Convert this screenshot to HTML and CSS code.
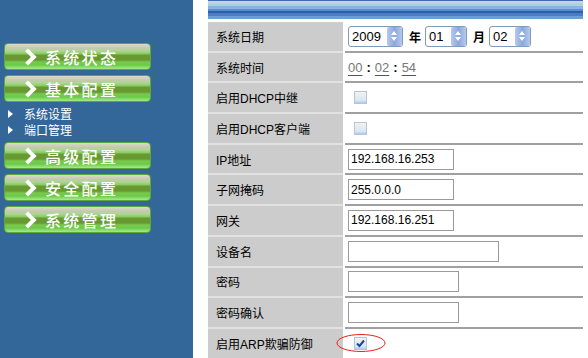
FILE: index.html
```html
<!DOCTYPE html>
<html lang="zh-CN">
<head>
    <meta charset="UTF-8">
    <title>系统设置</title>
    <link rel="stylesheet" href="styles.css">
</head>
<body>
    <div class="sidenav">
        <a href="#" class="menu-button"><span class="chev"></span>系统状态</a>
        <a href="#" class="menu-button"><span class="chev"></span>基本配置</a>
        <ul class="sub-menu">
            <li><span class="tri"></span>系统设置</li>
            <li><span class="tri"></span>端口管理</li>
        </ul>
        <a href="#" class="menu-button"><span class="chev"></span>高级配置</a>
        <a href="#" class="menu-button"><span class="chev"></span>安全配置</a>
        <a href="#" class="menu-button"><span class="chev"></span>系统管理</a>
    </div>

    <div class="main">
        <div class="banner"></div>
        <div class="form-table">
            <div class="label">系统日期</div>
            <div class="value">
                <div class="spin wide"><span>2009</span><i class="spin-btn"></i></div>
                <b class="unit">年</b>
                <div class="spin"><span>01</span><i class="spin-btn"></i></div>
                <b class="unit">月</b>
                <div class="spin"><span>02</span><i class="spin-btn"></i></div>
            </div>

            <div class="label">系统时间</div>
            <div class="value time">
                <u>00</u><b>:</b><u>02</u><b>:</b><u>54</u>
            </div>

            <div class="label">启用DHCP中继</div>
            <div class="value"><span class="check"></span></div>

            <div class="label">启用DHCP客户端</div>
            <div class="value"><span class="check"></span></div>

            <div class="label">IP地址</div>
            <div class="value"><input class="text-input" type="text" value="192.168.16.253"></div>

            <div class="label">子网掩码</div>
            <div class="value"><input class="text-input" type="text" value="255.0.0.0"></div>

            <div class="label">网关</div>
            <div class="value"><input class="text-input" type="text" value="192.168.16.251"></div>

            <div class="label">设备名</div>
            <div class="value"><input class="text-input long" type="text" value=""></div>

            <div class="label">密码</div>
            <div class="value"><input class="text-input mid" type="password" value=""></div>

            <div class="label">密码确认</div>
            <div class="value"><input class="text-input mid" type="password" value=""></div>

            <div class="label">启用ARP欺骗防御</div>
            <div class="value">
                <span class="check checked">
                    <svg width="11" height="11" viewBox="0 0 11 11"><path d="M2 5.5 L4.5 8 L9 2.5" fill="none" stroke="#21439c" stroke-width="2"/></svg>
                    <svg class="ring" width="50" height="20" viewBox="0 0 50 20"><ellipse cx="25" cy="10" rx="24" ry="8.5" fill="none" stroke="#e8201a" stroke-width="1"/></svg>
                </span>
            </div>
        </div>
    </div>
</body>
</html>
```

FILE: styles.css
```css
/* page reset */
body {
    margin: 0;
    padding: 0;
    display: flex;
    height: 358px;
    overflow: hidden;
    background-color: #fff;
    font-family: "Liberation Sans", "Noto Sans CJK SC", sans-serif;
    font-size: 12px;
}

/* left navigation */
.sidenav {
    width: 193px;
    flex-shrink: 0;
    background-color: #336699;
    padding-top: 43px;
    box-sizing: border-box;
}

.menu-button {
    display: flex;
    align-items: center;
    width: 147px;
    height: 27px;
    margin: 0 0 5px 4px;
    box-sizing: border-box;
    border: 1px solid #5ba93c;
    border-radius: 4px;
    background: linear-gradient(to bottom,
        #d8dcc8 0, #c8c8b0 4px, #a8d890 7px, #88c860 10px,
        #6a9a30 11px, #669933 16px, #7cc850 18px, #66cc44 21px, #9ee080 24px, #c0e8a8 27px);
    color: #fff;
    text-decoration: none;
    font-family: "Noto Sans CJK SC", sans-serif;
    font-size: 16px;
    font-weight: 500;
    letter-spacing: 2.3px;
    padding-left: 17px;
}

.chev {
    width: 8px;
    height: 8px;
    border-right: 4px solid #fff;
    border-top: 4px solid #fff;
    transform: rotate(45deg);
    margin-right: 11px;
}

.sub-menu {
    list-style: none;
    margin: -1px 0 4px 0;
    padding: 0;
    color: #fff;
    font-size: 12px;
    font-family: "Noto Sans CJK SC", sans-serif;
}

.sub-menu li {
    height: 16px;
    line-height: 16px;
    display: flex;
    align-items: center;
}

.tri {
    width: 0;
    height: 0;
    border-left: 5px solid #fff;
    border-top: 4px solid transparent;
    border-bottom: 4px solid transparent;
    margin: 0 11px 0 8px;
}

/* right side content */
.main {
    width: 375px;
    margin-left: 15px;
    flex-shrink: 0;
}

.banner {
    height: 20px;
    background: linear-gradient(to bottom,
        #3e6cb0 0, #3e6cb0 1px, #cfd0f2 1px, #c4c8ee 4px, #a6d4d4 4px, #a6d4d4 6px,
        #8eb2e2 6px, #8eb2e2 9px, #5a8ed2 9px, #5a8ed2 11px, #2e5ea8 11px, #2e5ea8 13px,
        #4a7ec4 13px, #4a7ec4 16px, #6c9ed2 16px, #6c9ed2 19px, #fff 19px);
}

.form-table {
    margin-top: 2px;
    display: grid;
    grid-template-columns: 137px 238px;
    grid-auto-rows: 30.7px;
}

.label {
    background-color: #cccccc;
    border-bottom: 2px solid #e2e2e2;
    padding-left: 8px;
    display: flex;
    align-items: center;
    color: #000;
    margin-right: 2px;
}

.value {
    border-bottom: 2px solid #a0a0a0;
    display: flex;
    align-items: center;
    padding-left: 3px;
}

/* xp style spin selects */
.spin {
    display: flex;
    align-items: center;
    width: 42px;
    height: 21px;
    box-sizing: border-box;
    border: 1px solid #7f9db9;
    border-radius: 3px;
    background-color: #fff;
    font-size: 13px;
    padding-left: 3px;
}

.spin.wide {
    width: 55px;
}

.spin span {
    flex: 1;
}

.spin-btn {
    width: 15px;
    height: 19px;
    border-radius: 2px;
    background: linear-gradient(to right, #b5c9ef, #8aa8e0 50%, #b5c9ef);
    position: relative;
}

.spin-btn::before,
.spin-btn::after {
    content: "";
    position: absolute;
    left: 4px;
    border-left: 3.5px solid transparent;
    border-right: 3.5px solid transparent;
}

.spin-btn::before {
    top: 4px;
    border-bottom: 4px solid #fff;
}

.spin-btn::after {
    top: 10px;
    border-top: 4px solid #fff;
}

.unit {
    font-family: "Noto Sans CJK SC", sans-serif;
    font-size: 12px;
    margin: 0 4px 0 6px;
}

.time {
    color: #777;
    font-size: 13px;
}

.time u {
    text-decoration-color: #555;
    text-underline-offset: 3px;
}

.time b {
    color: #000;
    margin: 0 4px;
}

/* checkboxes */
.check {
    position: relative;
    width: 11px;
    height: 11px;
    margin-left: 6px;
    border: 1px solid #b9c4d2;
    background: linear-gradient(to bottom, #f2f2f2, #e6e8f0 50%, #c8f0f8 75%, #c0c0f0);
}

.check svg {
    display: block;
}

.check .ring {
    position: absolute;
    left: -19px;
    top: -5px;
}

/* text inputs */
.text-input {
    width: 106px;
    height: 21px;
    box-sizing: border-box;
    border: 1px solid #9a9a9a;
    font-family: "Liberation Sans", sans-serif;
    font-size: 12px;
    padding: 0 2px;
    margin: 0;
}

.text-input.long {
    width: 151px;
}

.text-input.mid {
    width: 111px;
}
```
